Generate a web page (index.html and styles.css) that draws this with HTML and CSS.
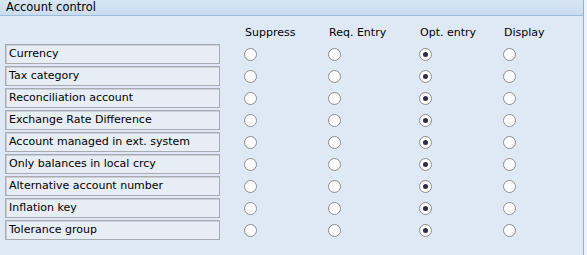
FILE: index.html
```html
<!DOCTYPE html>
<html lang="en">
<head>
    <meta charset="UTF-8">
    <meta name="viewport" content="width=device-width, initial-scale=1.0">
    <title>Account control</title>
    <link rel="stylesheet" href="styles.css">
</head>
<body>
    <div class="panel">
        <div class="panel-title">Account control</div>
        <div class="grid">
            <div></div>
            <div class="col-head">Suppress</div>
            <div class="col-head">Req. Entry</div>
            <div class="col-head">Opt. entry</div>
            <div class="col-head">Display</div>

            <div class="field">Currency</div>
            <span class="radio"></span><span class="radio"></span><span class="radio checked"></span><span class="radio"></span>

            <div class="field">Tax category</div>
            <span class="radio"></span><span class="radio"></span><span class="radio checked"></span><span class="radio"></span>

            <div class="field">Reconciliation account</div>
            <span class="radio"></span><span class="radio"></span><span class="radio checked"></span><span class="radio"></span>

            <div class="field">Exchange Rate Difference</div>
            <span class="radio"></span><span class="radio"></span><span class="radio checked"></span><span class="radio"></span>

            <div class="field">Account managed in ext. system</div>
            <span class="radio"></span><span class="radio"></span><span class="radio checked"></span><span class="radio"></span>

            <div class="field">Only balances in local crcy</div>
            <span class="radio"></span><span class="radio"></span><span class="radio checked"></span><span class="radio"></span>

            <div class="field">Alternative account number</div>
            <span class="radio"></span><span class="radio"></span><span class="radio checked"></span><span class="radio"></span>

            <div class="field">Inflation key</div>
            <span class="radio"></span><span class="radio"></span><span class="radio checked"></span><span class="radio"></span>

            <div class="field">Tolerance group</div>
            <span class="radio"></span><span class="radio"></span><span class="radio checked"></span><span class="radio"></span>
        </div>
    </div>
</body>
</html>
```

FILE: styles.css
```css
body { margin: 0; background: #eef3f9; font-family: "DejaVu Sans", Tahoma, sans-serif; font-size: 11px; color: #000; }
.panel { width: 583px; height: 255px; background: #dfe9f5; border-right: 1px solid #8fb2dc; }
.panel-title { height: 15px; line-height: 15px; padding-left: 6px; font-size: 11.5px; background: linear-gradient(#d8e6f4, #c9dcef); border-bottom: 1px solid #9dbcdb; }
.grid { display: grid; grid-template-columns: 238px 84px 91px 84px 60px; row-gap: 2px; padding: 7px 0 0 5px; align-items: center; }
.col-head { height: 19px; line-height: 19px; padding-left: 2px; }
.field { height: 18px; line-height: 18px; padding-left: 3px; width: 210px; background: #e6edf4; border: 1px solid #a7abaf; box-shadow: inset 1px 1px 0 #c9cfd6; white-space: nowrap; overflow: hidden; }
.radio { width: 11px; height: 11px; margin-left: 1px; border: 1px solid #8c8c8c; border-radius: 50%; background: #fff; display: flex; align-items: center; justify-content: center; }
.radio.checked::after { content: ""; width: 5px; height: 5px; border-radius: 50%; background: #2b2d45; }
```
